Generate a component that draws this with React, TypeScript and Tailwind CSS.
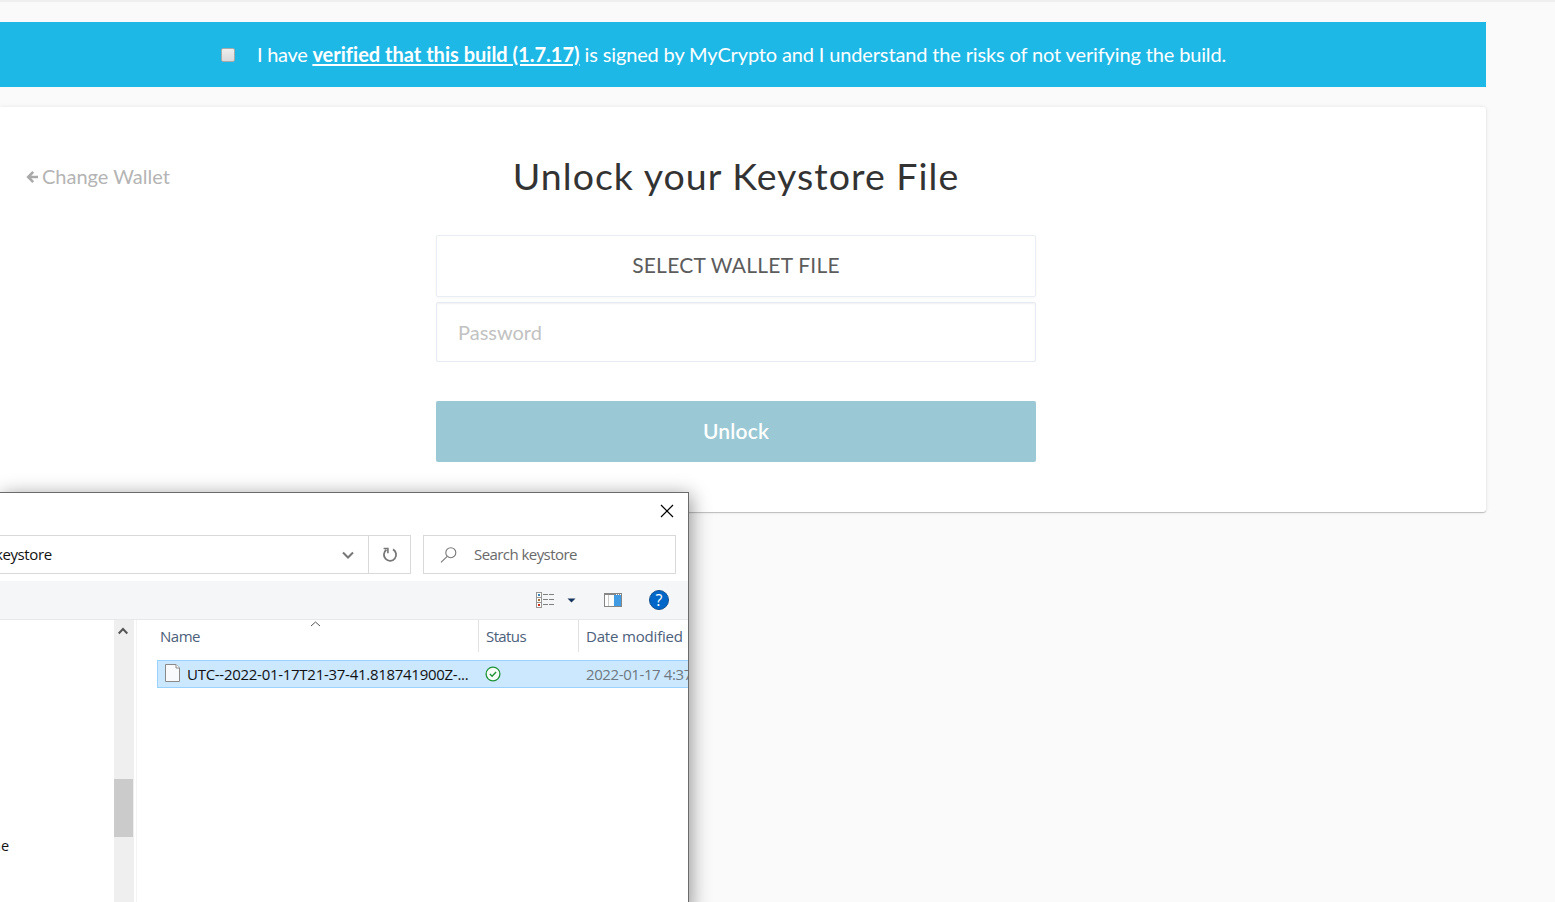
import React from "react";

function Banner() {
  return (
    <div className="mt-5 flex h-[65px] w-[1486px] items-center bg-[#1eb8e7] pl-[221px] text-white">
      <span className="h-[14px] w-[14px] shrink-0 rounded-[2px] border border-[#a9a9a9] bg-linear-to-b from-[#eeeeee] to-[#dadada]" />
      <p className="ml-[22px] pb-[2px] whitespace-nowrap text-[20px] leading-[30px] tracking-[-0.13px]">
        <span className="tracking-[-0.28px]">I have </span>
        <a className="font-bold tracking-[0.01px] underline decoration-2 underline-offset-2">verified that this build (1.7.17)</a>
        <span className="tracking-[-0.14px]"> is signed by MyCrypto and I understand the risks of not verifying the build.</span>
      </p>
    </div>
  );
}

function BackArrow() {
  return (
    <svg width="12" height="14" viewBox="0 0 12 14" fill="none" stroke="#aaaaaa" strokeWidth="2.6">
      <path d="M7.200 1.800 2.200 7 7.200 12.200M2 7h10" />
    </svg>
  );
}

function UnlockCard() {
  return (
    <main className="mt-5 flex h-[405px] w-[1486px] rounded-r-[3px] bg-white shadow-[0_1px_1px_rgba(0,0,0,0.22),0_0_4px_rgba(0,0,0,0.09)]">
      <div className="w-[436px] shrink-0 pt-[54px] pl-[26px]">
        <button className="flex items-center gap-1 text-[20px] leading-[30px] text-[#b4b4b4]">
          <span className="pt-[2px]"><BackArrow /></span>
          <span className="whitespace-nowrap">Change Wallet</span>
        </button>
      </div>
      <div className="flex w-[600px] shrink-0 flex-col">
        <h1 className="mt-[44px] whitespace-nowrap text-center text-[37.500px] leading-[50px] tracking-[1.030px] text-[#333333]">
          Unlock your Keystore File
        </h1>
        <button className="mt-[34px] h-[62px] rounded-[2px] border border-[#e9eef4] pb-[2px] text-[21px] tracking-[0.23px] text-[#5c5c5c] shadow-[0_1px_3px_rgba(0,0,0,0.04)]">
          SELECT WALLET FILE
        </button>
        <div className="mt-[5px] flex h-[60px] items-center rounded-[2px] border border-[#e5eaf3] pl-[21px] text-[20px] text-[#c2c2c2] shadow-[inset_0_1px_2px_rgba(0,0,0,0.06)]">
          Password
        </div>
        <button className="mt-[39px] h-[61px] rounded-[2px] bg-[#9ac8d4] pb-[2px] text-[21px] font-semibold tracking-[0.15px] text-white">Unlock</button>
      </div>
    </main>
  );
}

function SearchIcon() {
  return (
    <svg width="18" height="18" viewBox="0 0 18 18" fill="none" stroke="#777777" strokeWidth="1.1">
      <circle cx="10.8" cy="6.7" r="5" />
      <path d="M7.2 10.3 1 16.3" />
    </svg>
  );
}

function ViewIcon() {
  return (
    <svg width="19" height="16" viewBox="0 0 19 16" shapeRendering="crispEdges">
      <path d="M.5.5h5v15h-5zM.5 5.5h5M.5 10.5h5" fill="#ffffff" stroke="#959595" />
      <path d="M2 2h2v2H2z" fill="#3c7fb1" />
      <path d="M2 7h2v2H2z" fill="#a36b35" />
      <path d="M2 12h2v2H2z" fill="#d02b16" />
      <path d="M7 2.5h5M13 2.5h5M7 7.5h5M13 7.5h5M7 12.5h5M13 12.5h5" stroke="#808080" />
    </svg>
  );
}

function PaneIcon() {
  return (
    <svg width="18" height="14" viewBox="0 0 18 14" shapeRendering="crispEdges">
      <path d="M.5.5h17v13H.5z" fill="#ffffff" stroke="#868686" />
      <path d="M0 0h18v2H0z" fill="#868686" />
      <path d="M12 1h1v1h-1zM14 1h1v1h-1zM16 1h1v1h-1z" fill="#ffffff" />
      <path d="M4 2h1v11H4z" fill="#c9c9c9" />
      <path d="M10 2h7v11h-7z" fill="#429ce3" />
    </svg>
  );
}

function FileIcon() {
  return (
    <svg width="15" height="18" viewBox="0 0 15 18">
      <path d="M.5.5h10.500L14.500 4v13.500H.5z" fill="#f9fafb" stroke="#8a8a8a" />
      <path d="M11 .5V4h3.500" fill="#ffffff" stroke="#8a8a8a" />
    </svg>
  );
}

function SyncedIcon() {
  return (
    <svg width="16" height="16" viewBox="0 0 16 16" fill="none" stroke="#1f9335">
      <circle cx="8" cy="8" r="6.900" fill="#f6fcf6" strokeWidth="1.300" />
      <path d="m4.900 8 2.200 2.200 4-4.100" strokeWidth="1.400" />
    </svg>
  );
}

function AddressRow() {
  return (
    <div className="mt-[5px] flex h-[39px] text-[15px]">
      <div className="flex w-[369px] items-center border-y border-r border-[#d9d9d9]">
        <span className="-ml-[5px] w-[347px] whitespace-nowrap tracking-[-0.4px] text-[#111111]">keystore</span>
        <svg width="12" height="8" viewBox="0 0 12 8" fill="none" stroke="#777777" strokeWidth="2">
          <path d="m1 1.500 5 5 5-5" />
        </svg>
      </div>
      <div className="flex w-[42px] items-center justify-center border-y border-r border-[#d9d9d9]">
        <svg width="16" height="16" viewBox="0 0 16 16" fill="none" stroke="#777777" strokeWidth="1.800">
          <path d="M11 2.400A6.100 6.100 0 1 1 4.400 2.800" />
          <path d="M1.600 1.500h4.300v4.800" strokeWidth="1.600" />
        </svg>
      </div>
      <div className="ml-3 flex w-[253px] items-center border border-[#d9d9d9] pl-4">
        <SearchIcon />
        <span className="ml-4 whitespace-nowrap tracking-[-0.56px] text-[#6a6a6a]">Search keystore</span>
      </div>
    </div>
  );
}

function Toolbar() {
  return (
    <div className="mt-[7px] flex h-[39px] items-center border-b border-[#e8e8e9] bg-[#f4f6f8] pl-[536px]">
      <ViewIcon />
      <svg className="ml-[12px]" width="9" height="5" viewBox="0 0 9 5">
        <path d="M.5.500h8L4.500 4.500z" fill="#17365d" />
      </svg>
      <span className="ml-[28px]"><PaneIcon /></span>
      <span className="ml-[27px] flex h-5 w-5 items-center justify-center rounded-full border border-[#14508f] bg-[#0067c8] text-[16px] leading-none font-medium text-white">
        ?
      </span>
    </div>
  );
}

function FileList() {
  return (
    <section className="flex w-[552px] flex-col border-l border-[#f4f4f4]">
      <div className="relative flex h-8 items-center text-[15px] tracking-[-0.18px] text-[#4c607a]">
        <svg className="absolute top-[1px] left-[173px]" width="11" height="6" viewBox="0 0 11 6" fill="none" stroke="#555555">
          <path d="m1 5 4.500-4L10 5" />
        </svg>
        <span className="flex h-full w-[342px] items-center border-r border-[#e2e2e2] pl-[23px] tracking-[-0.5px]">Name</span>
        <span className="flex h-full w-[100px] items-center border-r border-[#e2e2e2] pl-[7px] tracking-[-0.6px]">Status</span>
        <span className="flex h-full items-center whitespace-nowrap pl-[7px]">Date modified</span>
      </div>
      <div className="mt-2 ml-[20px] flex h-7 items-center overflow-hidden border-y border-l border-[#99d1ff] bg-[#cce8ff] text-[15px] whitespace-nowrap">
        <span className="ml-[7px] -mt-[2px]"><FileIcon /></span>
        <span className="ml-[7px] w-[297px] shrink-0 tracking-[-0.28px] text-[#111111]">UTC--2022-01-17T21-37-41.818741900Z-...</span>
        <span className="w-[102px] shrink-0 pl-[0.500px]"><SyncedIcon /></span>
        <span className="tracking-[-0.4px] text-[#6d7880]">2022-01-17 4:37</span>
      </div>
    </section>
  );
}

function FileDialog() {
  return (
    <div className="absolute top-[492px] left-0 flex h-[420px] w-[689px] flex-col border-t border-r border-[#6b6b6b] bg-white font-['Open_Sans',sans-serif] shadow-[2px_3px_18px_rgba(0,0,0,0.42)]">
      <div className="flex h-[37px] items-center justify-end pr-[14px] pb-[2px]">
        <svg width="14" height="14" viewBox="0 0 14 14" fill="none" stroke="#000000" strokeWidth="1.200">
          <path d="m1 1 12 12M13 1 1 13" />
        </svg>
      </div>
      <AddressRow />
      <Toolbar />
      <div className="flex h-[292px]">
        <nav className="w-[114px] pt-[214px] text-[14.500px] leading-6 text-[#111111]">
          <span className="-ml-[8px]">ne</span>
        </nav>
        <div className="mr-[2px] flex w-5 flex-col bg-[#efefef]">
          <svg className="mt-[7px] ml-[4px]" width="10" height="8" viewBox="0 0 10 8" fill="none" stroke="#555555" strokeWidth="2">
            <path d="m.7 6.500 4.300-4.500 4.300 4.500" />
          </svg>
          <span className="mt-[144px] h-[58px] w-[19px] bg-[#cbcbcb]" />
        </div>
        <FileList />
      </div>
    </div>
  );
}

export default function App() {
  return (
    <div className="relative h-[902px] w-[1555px] overflow-hidden border-t-2 border-[#efefef] bg-[#fafafa] font-['Lato',sans-serif]">
      <Banner />
      <UnlockCard />
      <div className="absolute -top-[2px] left-0"><FileDialog /></div>
    </div>
  );
}
